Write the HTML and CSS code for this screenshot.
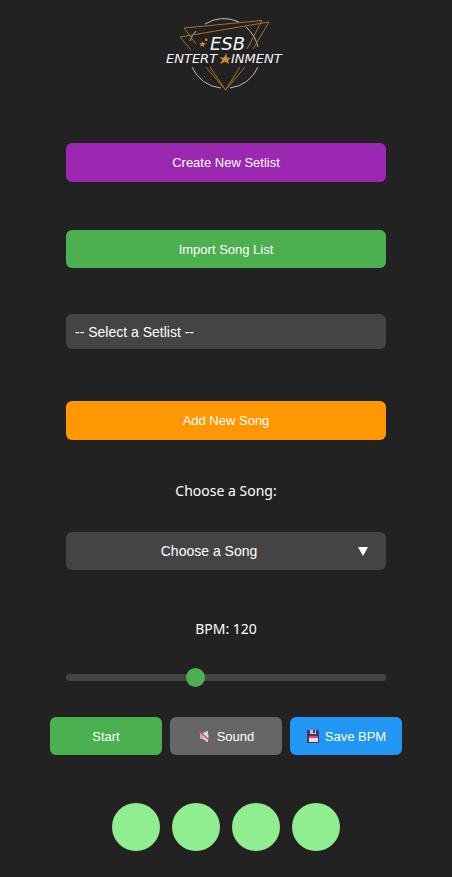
FILE: index.html
```html
<!DOCTYPE html>
<html lang="en">
<head>
<meta charset="utf-8">
<meta name="viewport" content="width=device-width, initial-scale=1">
<title>ESB Entertainment</title>
<link rel="stylesheet" href="styles.css">
</head>
<body>
<main class="app">
  <svg class="logo" viewBox="2 0 136 92" role="img" aria-label="ESB Entertainment">
    <g class="logo-ring">
      <path d="M49 16 A35 35 0 0 1 83 14"/>
      <path d="M34 33 Q36 27 40 23"/>
      <path d="M90 19 Q99 27 102 39"/>
      <path d="M36 59 A35 35 0 0 0 65 80"/>
      <path d="M74 80 A35 35 0 0 0 102 59"/>
    </g>
    <g class="logo-triangle">
      <path d="M40 36 L28 20 L106 12.500 L91 41"/>
      <path d="M35 42 L24 29 L113 14 L97 41"/>
      <path d="M50 59 L69.500 82 L89 59"/>
      <path d="M54 59 L69.500 82 L84 59"/>
    </g>
    <text class="logo-name" x="54" y="42">ESB</text>
    <text class="logo-word" x="10" y="55">ENTERT</text>
    <text class="logo-word" x="75" y="55">INMENT</text>
    <g class="logo-star">
      <path d="M70 45 L71 49.500 L75 50 L72 52 L73 56 L69 53.500 L64 56 L66.500 51.500 L63 49.500 L68 49.500 Z"/>
      <path d="M47 33 L47.500 35 L50 35.500 L48 37 L48 39 L46 37.500 L44 39 L45 36.500 L43 35.500 L46 35 Z"/>
      <path d="M51 30 L51 31.500 L52 32 L50.500 33 L49 33 L49 31 Z"/>
    </g>
  </svg>

  <button class="btn create" type="button">Create New Setlist</button>
  <button class="btn import" type="button">Import Song List</button>
  <select class="setlist" aria-label="Setlist">
    <option>-- Select a Setlist --</option>
  </select>
  <button class="btn add" type="button">Add New Song</button>

  <p class="caption" id="song-label">Choose a Song:</p>
  <button class="song-picker" type="button" aria-labelledby="song-label song-value">
    <span class="song-value" id="song-value">Choose a Song</span>
    <svg class="arrow" viewBox="0 0 10 9" aria-hidden="true"><path d="M0 0H10L5 9Z"/></svg>
  </button>

  <label class="caption bpm" for="bpm">BPM: 120</label>
  <input class="slider" id="bpm" type="range" min="40" max="240" value="120">

  <div class="controls">
    <button class="btn start" type="button">Start</button>
    <button class="btn sound" type="button">
      <svg class="icon" viewBox="0 0 14 14" aria-hidden="true">
        <path fill="#b9b4bd" d="M2 4H6V10H2Z"/>
        <path fill="#d8d3dc" d="M5 4L9 2H10V13H9L5 10Z"/>
        <path fill="#aaa5ae" d="M10 5Q12 7.500 10 10Z"/>
        <path fill="none" stroke="#e0456c" stroke-width="1.500" d="M1 2L12 12"/>
      </svg>
      Sound
    </button>
    <button class="btn save" type="button">
      <svg class="icon" viewBox="0 0 14 14" aria-hidden="true">
        <path fill="#463565" d="M1 1H12L13 2V14H1Z"/>
        <path fill="#c9c2d8" d="M4 1H10V5H4Z"/>
        <path fill="#463565" d="M7 1H9V4H7Z"/>
        <path fill="#e7dcef" d="M3 8H12V13H3Z"/>
        <path fill="#e2476f" d="M3 7H12V9H3Z"/>
      </svg>
      Save BPM
    </button>
  </div>

  <div class="beats">
    <span class="beat"></span>
    <span class="beat"></span>
    <span class="beat"></span>
    <span class="beat"></span>
  </div>
</main>
</body>
</html>
```
FILE: styles.css
```css
* {
  box-sizing: border-box;
}

body {
  margin: 0;
  background: #222;
  color: #fff;
  font-family: "Noto Sans", sans-serif;
}

.app {
  display: flex;
  flex-direction: column;
  align-items: center;
  padding: 8px 50px 26px;
}

.app > .btn,
.setlist,
.song-picker,
.slider {
  width: calc(100% - 32px);
}

.logo {
  width: 136px;
  height: 92px;
  margin-bottom: 43px;
}

.logo-ring {
  fill: none;
  stroke: #bdbdbd;
  stroke-width: 1;
}

.logo-triangle {
  fill: none;
  stroke: #a8702b;
  stroke-width: 1;
}

.logo-star {
  fill: #d18a32;
}

.logo-name,
.logo-word {
  fill: #f5f5f5;
  font-family: "DejaVu Sans", sans-serif;
  font-style: italic;
}

.logo-name {
  font-size: 18px;
}

.logo-word {
  font-size: 13px;
}

.btn {
  display: flex;
  align-items: center;
  justify-content: center;
  height: 38px;
  padding: 0;
  border: 0;
  border-radius: 6px;
  color: #fff;
  font-family: "Liberation Sans", sans-serif;
  font-size: 13px;
}

.create {
  height: 39px;
  margin-bottom: 48px;
  background: #9c27b0;
}

.import {
  margin-bottom: 46px;
  background: #4caf50;
}

.setlist {
  height: 35px;
  margin-bottom: 52px;
  padding: 0 9px;
  border: 0;
  border-radius: 6px;
  appearance: none;
  background: #444;
  color: #fff;
  font-family: "Liberation Sans", sans-serif;
  font-size: 14px;
}

.add {
  height: 39px;
  margin-bottom: 41px;
  background: #ff9800;
}

.caption {
  margin: 0 0 31px;
  font-size: 14px;
  line-height: 20px;
}

.song-picker {
  display: flex;
  align-items: center;
  gap: 6px;
  height: 38px;
  margin-bottom: 49px;
  padding: 0 18px 0 0;
  border: 0;
  border-radius: 6px;
  background: #444;
  color: #fff;
  font-family: "Liberation Sans", sans-serif;
  font-size: 14px;
}

.song-value {
  flex: 1;
}

.arrow {
  width: 10px;
  height: 9px;
  fill: #fff;
}

.bpm {
  margin-bottom: 35px;
}

.slider {
  height: 7px;
  margin: 0 0 36px;
  border-radius: 4px;
  appearance: none;
  background: #444;
}

.slider::-webkit-slider-thumb {
  width: 19px;
  height: 19px;
  border-radius: 50%;
  appearance: none;
  background: #4caf50;
}

.controls {
  display: grid;
  grid-template-columns: repeat(3, 1fr);
  gap: 8px;
  width: 100%;
  margin-bottom: 48px;
}

.controls .btn {
  gap: 5px;
}

.start {
  background: #4caf50;
}

.sound {
  background: #666;
}

.save {
  background: #2196f3;
}

.icon {
  width: 14px;
  height: 14px;
}

.beats {
  display: flex;
  gap: 12px;
}

.beat {
  width: 48px;
  height: 48px;
  border-radius: 50%;
  background: #90ee90;
}
```
